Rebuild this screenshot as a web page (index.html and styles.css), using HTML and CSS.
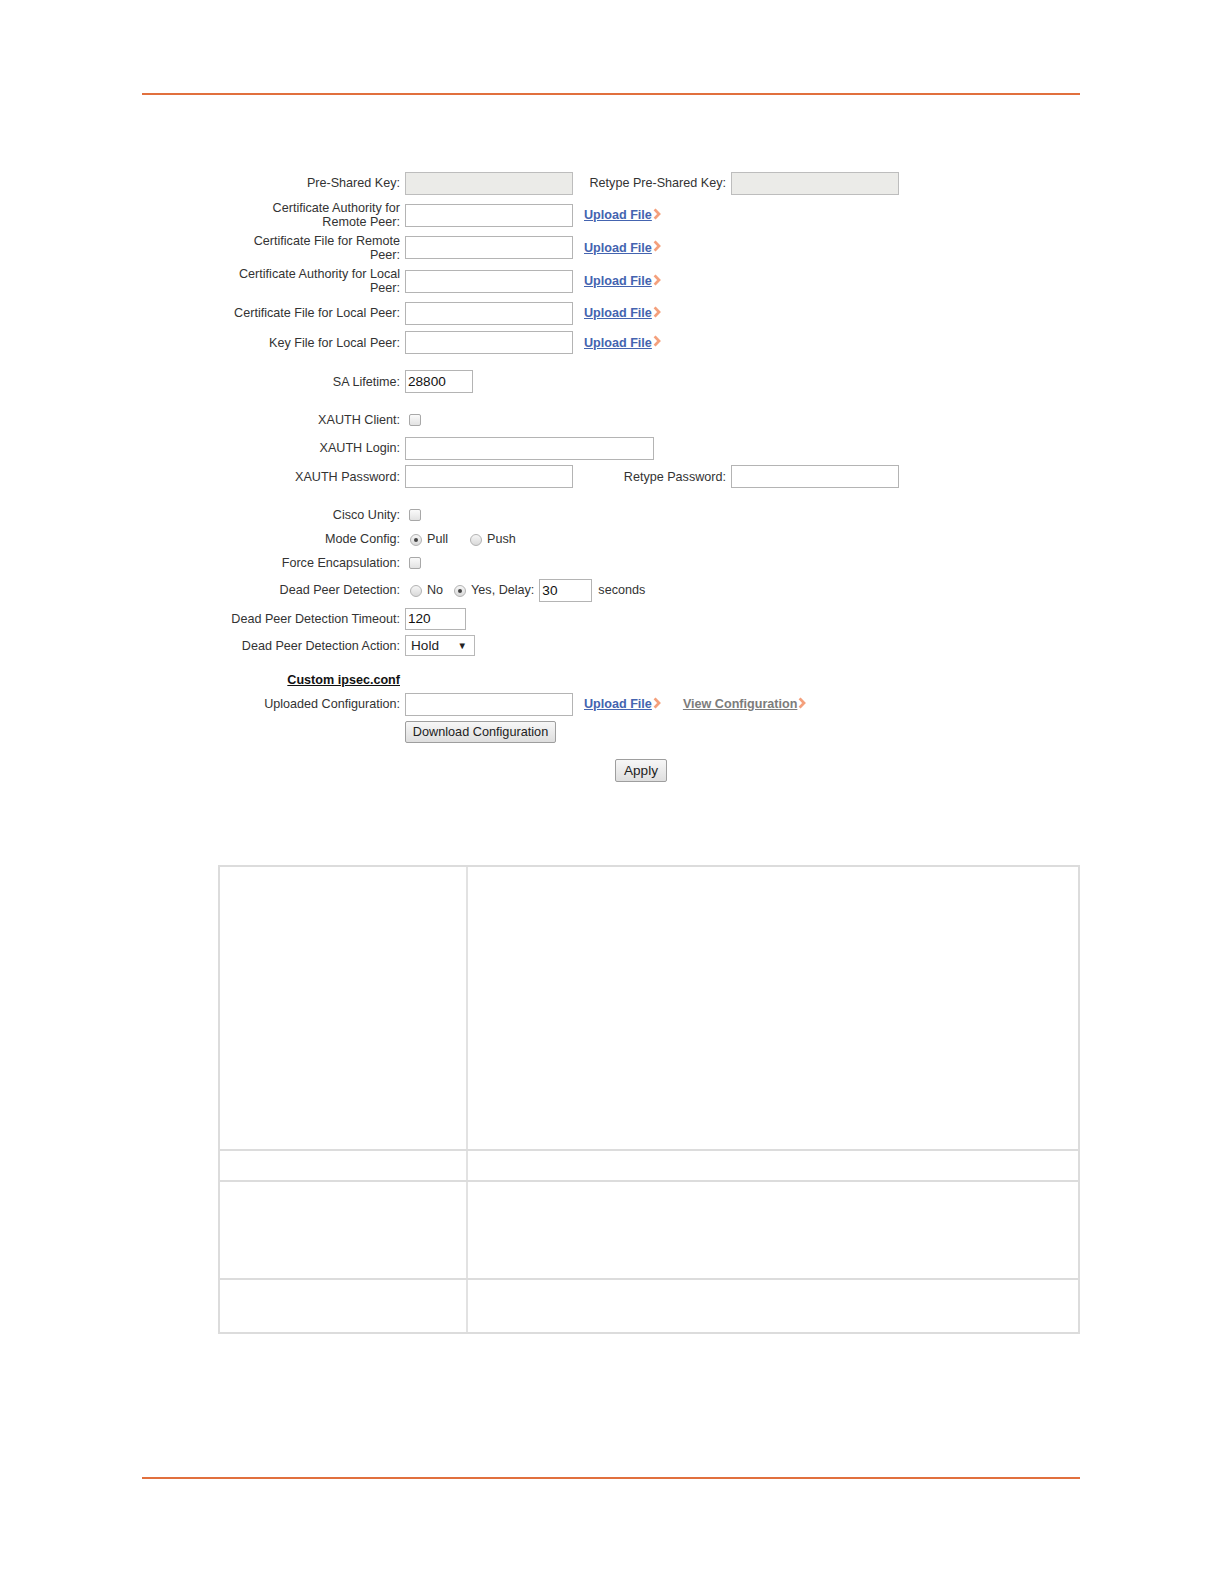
FILE: index.html
```html
<!DOCTYPE html>
<html>
<head>
<meta charset="utf-8">
<link rel="stylesheet" href="styles.css">
</head>
<body>
<div class="page">
  <div class="rule"></div>

  <div class="form">
    <div class="row h32">
      <span class="lbl">Pre-Shared Key:</span>
      <span class="txt dis"></span>
      <span class="lbl2">Retype Pre-Shared Key:</span>
      <span class="txt dis"></span>
    </div>
    <div class="row h32">
      <span class="lbl">Certificate Authority for<br>Remote Peer:</span>
      <span class="txt"></span>
      <a class="up">Upload File<svg class="chev" viewBox="0 0 8 12"><path d="M1.6 1.4 L6 6 L1.6 10.6"/></svg></a>
    </div>
    <div class="row h33">
      <span class="lbl">Certificate File for Remote<br>Peer:</span>
      <span class="txt"></span>
      <a class="up">Upload File<svg class="chev" viewBox="0 0 8 12"><path d="M1.6 1.4 L6 6 L1.6 10.6"/></svg></a>
    </div>
    <div class="row h34">
      <span class="lbl">Certificate Authority for Local<br>Peer:</span>
      <span class="txt"></span>
      <a class="up">Upload File<svg class="chev" viewBox="0 0 8 12"><path d="M1.6 1.4 L6 6 L1.6 10.6"/></svg></a>
    </div>
    <div class="row h30">
      <span class="lbl">Certificate File for Local Peer:</span>
      <span class="txt"></span>
      <a class="up">Upload File<svg class="chev" viewBox="0 0 8 12"><path d="M1.6 1.4 L6 6 L1.6 10.6"/></svg></a>
    </div>
    <div class="row h29">
      <span class="lbl">Key File for Local Peer:</span>
      <span class="txt"></span>
      <a class="up">Upload File<svg class="chev" viewBox="0 0 8 12"><path d="M1.6 1.4 L6 6 L1.6 10.6"/></svg></a>
    </div>

    <div class="row h29 gap10">
      <span class="lbl">SA Lifetime:</span>
      <span class="txt short">28800</span>
    </div>

    <div class="row h24 gap12">
      <span class="lbl">XAUTH Client:</span>
      <span class="check"></span>
    </div>
    <div class="row h32">
      <span class="lbl">XAUTH Login:</span>
      <span class="txt wide"></span>
    </div>
    <div class="row h25">
      <span class="lbl">XAUTH Password:</span>
      <span class="txt"></span>
      <span class="lbl2">Retype Password:</span>
      <span class="txt"></span>
    </div>

    <div class="row h24 gap14">
      <span class="lbl">Cisco Unity:</span>
      <span class="check"></span>
    </div>
    <div class="row h23">
      <span class="lbl">Mode Config:</span>
      <span class="radio on"></span><span class="opt">Pull</span>
      <span class="radio push"></span><span class="opt">Push</span>
    </div>
    <div class="row h25">
      <span class="lbl">Force Encapsulation:</span>
      <span class="check"></span>
    </div>
    <div class="row h30">
      <span class="lbl">Dead Peer Detection:</span>
      <span class="radio"></span><span class="opt">No</span>
      <span class="radio yes on"></span><span class="opt">Yes, Delay:</span>
      <span class="txt delay">30</span>
      <span class="secs">seconds</span>
    </div>
    <div class="row h27">
      <span class="lbl">Dead Peer Detection Timeout:</span>
      <span class="txt tmo">120</span>
    </div>
    <div class="row h27">
      <span class="lbl">Dead Peer Detection Action:</span>
      <span class="select">Hold<span class="arrow">&#9660;</span></span>
    </div>

    <div class="row h22 gap10">
      <span class="lbl"><span class="custom">Custom ipsec.conf</span></span>
    </div>
    <div class="row h26">
      <span class="lbl">Uploaded Configuration:</span>
      <span class="txt"></span>
      <a class="up">Upload File<svg class="chev" viewBox="0 0 8 12"><path d="M1.6 1.4 L6 6 L1.6 10.6"/></svg></a>
      <a class="view">View Configuration<svg class="chev" viewBox="0 0 8 12"><path d="M1.6 1.4 L6 6 L1.6 10.6"/></svg></a>
    </div>
    <div class="row h26 gap2">
      <span class="lbl"></span>
      <span class="btn">Download Configuration</span>
    </div>
    <div class="row h26 gap12 applyrow">
      <span class="btn apply">Apply</span>
    </div>
  </div>

  <div class="tbl">
    <div class="tr r1"><div class="td c1"></div><div class="td c2"></div></div>
    <div class="tr r2"><div class="td c1"></div><div class="td c2"></div></div>
    <div class="tr r3"><div class="td c1"></div><div class="td c2"></div></div>
    <div class="tr r4"><div class="td c1"></div><div class="td c2"></div></div>
  </div>

  <div class="rule bottom"></div>
</div>
</body>
</html>
```

FILE: styles.css
```css
html, body {
  margin: 0;
  padding: 0;
  background: #ffffff;
  overflow: hidden;
}

body {
  width: 1224px;
  height: 1584px;
  font-family: "Liberation Sans", Arial, sans-serif;
  font-size: 12.6px;
  color: #333333;
}

.page {
  width: 938px;
  margin-left: 142px;
  padding-top: 93px;
}

.rule {
  height: 2px;
  background: #e1703e;
}

.rule.bottom {
  margin-top: 143px;
}

.form {
  margin-top: 72px;
  margin-left: 86px;
  display: flex;
  flex-direction: column;
}

.row {
  display: flex;
  align-items: center;
}

.h22 { height: 22px; }
.h23 { height: 23px; }
.h24 { height: 24px; }
.h25 { height: 25px; }
.h26 { height: 26px; }
.h27 { height: 27px; }
.h29 { height: 29px; }
.h30 { height: 30px; }
.h32 { height: 32px; }
.h33 { height: 33px; }
.h34 { height: 34px; }

.gap2 { margin-top: 2px; }
.gap10 { margin-top: 10px; }
.gap12 { margin-top: 12px; }
.gap14 { margin-top: 14px; }

.lbl {
  width: 172px;
  margin-right: 5px;
  text-align: right;
  line-height: 14px;
  white-space: nowrap;
  flex-shrink: 0;
}

.lbl2 {
  width: 153px;
  padding-right: 5px;
  text-align: right;
  white-space: nowrap;
  flex-shrink: 0;
}

.txt {
  box-sizing: border-box;
  width: 168px;
  height: 23px;
  border: 1px solid #b4b4b4;
  background: #ffffff;
  font-size: 13.6px;
  color: #111;
  line-height: 21px;
  padding-left: 2px;
  flex-shrink: 0;
}

.txt.dis {
  background: #ebebe8;
  border-color: #bdbdbd;
}

.txt.short { width: 68px; }
.txt.wide { width: 249px; }
.txt.delay { width: 53px; margin-left: 5px; }
.txt.tmo { width: 61px; height: 22px; line-height: 20px; }

.up, .view {
  margin-left: 11px;
  font-weight: bold;
  text-decoration: underline;
  color: #4464b0;
  display: inline-flex;
  align-items: center;
  white-space: nowrap;
}

.view {
  margin-left: 22px;
  color: #7c7c7c;
}

.chev {
  width: 8px;
  height: 12px;
  margin-left: 1px;
  margin-top: -3px;
}

.chev path {
  fill: none;
  stroke: #f4a07c;
  stroke-width: 2.8;
}

.check {
  box-sizing: border-box;
  width: 12px;
  height: 12px;
  margin-left: 4px;
  border: 1px solid #a8a8a8;
  border-radius: 2px;
  background: linear-gradient(#fafafa, #e2e2e2);
}

.radio {
  box-sizing: border-box;
  width: 12px;
  height: 12px;
  margin-left: 5px;
  border: 1px solid #b2b2b2;
  border-radius: 50%;
  background: linear-gradient(#f6f6f6, #d9d9d9);
  position: relative;
  margin-top: 2px;
}

.radio.on::after {
  content: "";
  position: absolute;
  left: 3px;
  top: 3px;
  width: 4px;
  height: 4px;
  border-radius: 50%;
  background: #444;
}

.radio.push { margin-left: 22px; }
.radio.yes { margin-left: 11px; }

.opt {
  margin-left: 5px;
  white-space: nowrap;
}

.secs {
  margin-left: 6px;
}

.select {
  box-sizing: border-box;
  width: 70px;
  height: 21px;
  border: 1px solid #b8b8b8;
  background: #ffffff;
  font-size: 13.6px;
  color: #222;
  display: flex;
  align-items: center;
  padding-left: 5px;
  position: relative;
}

.arrow {
  position: absolute;
  right: 7px;
  top: 4px;
  font-size: 9.5px;
  color: #222;
}

.custom {
  font-weight: bold;
  text-decoration: underline;
  color: #111;
}

.btn {
  box-sizing: border-box;
  width: 151px;
  height: 22px;
  border: 1px solid #9e9e9e;
  border-radius: 2px;
  background: linear-gradient(#f7f7f7, #dedede);
  color: #222;
  font-size: 12.7px;
  display: flex;
  align-items: center;
  justify-content: center;
  white-space: nowrap;
}

.btn.apply {
  height: 23px;
  width: 52px;
  font-size: 13.6px;
}

.applyrow {
  padding-left: 387px;
}

.tbl {
  margin-top: 82px;
  margin-left: 76px;
  width: 862px;
  box-sizing: border-box;
  border: 2px solid #dcdcdc;
  display: flex;
  flex-direction: column;
}

.tr {
  display: flex;
  border-top: 2px solid #dcdcdc;
}

.tr.r1 { border-top: none; height: 282px; }
.tr.r2 { height: 29px; }
.tr.r3 { height: 96px; }
.tr.r4 { height: 52px; }

.td.c1 {
  width: 246px;
  border-right: 2px solid #e2e2e2;
}

.td.c2 {
  flex: 1;
}
```
